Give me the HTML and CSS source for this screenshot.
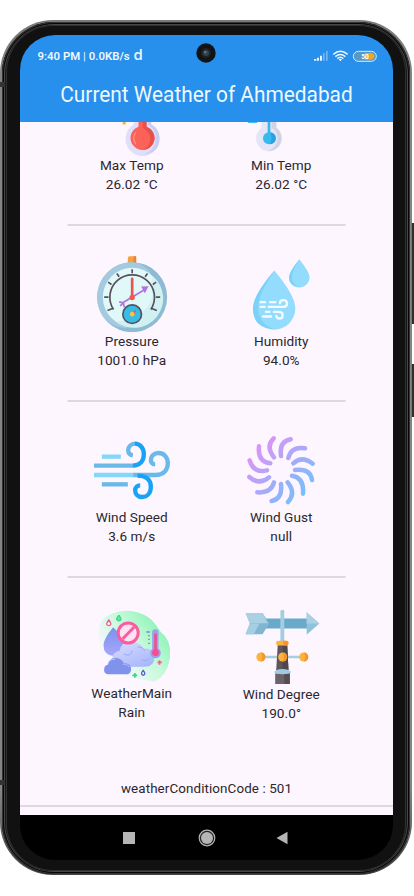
FILE: index.html
```
<!DOCTYPE html>
<html lang="en">
<head>
<meta charset="utf-8">
<title>Current Weather</title>
<link rel="stylesheet" href="styles.css">
</head>
<body>
<div class="phone">
  <i class="key volume"></i><i class="key power"></i>
  <i class="seam seam-tl"></i><i class="seam seam-bl"></i>
  <div class="rim"><div class="bezel"><div class="screen">
    <header class="top">
      <div class="status">
        <div class="clock">9:40 PM <span class="thin">|</span> 0.0KB/s <b class="app">d</b></div>
        <svg class="signals" viewBox="328 145 195 45" width="65" height="15">
          <g fill="#e6f3ff"><path d="M331 178h7v5h-7zM340 174h6v9h-6zM349 168h6v15h-6z"/><path opacity=".4" d="M358 161h5v22h-5zM367 154h5v29h-5z"/></g>
          <g fill="none" stroke="#eef7ff" stroke-width="4.5"><path d="M389 164q21-18 43 0M395 171q15-13 30 0M401 177q9-8 18 0"/></g><path fill="#fff" d="M405 179l5 6 5-6q-5-3-10 0z"/>
          <rect x="449" y="155" width="69" height="30" rx="15" fill="#5899c8" stroke="#d5eafa" stroke-width="3"/>
          <path d="M484 160h17q11 1 11 10t-11 10h-17z" fill="#eda530"/>
          <text x="484" y="178" class="charge">50</text>
        </svg>
      </div>
      <h1>Current Weather of Ahmedabad</h1>
      <svg class="camera" viewBox="0 0 20 20"><circle cx="10" cy="10" r="9.7" fill="#111416"/><circle cx="10" cy="10" r="5" fill="#1d2327"/><circle cx="10" cy="10" r="3" fill="#35434c"/><circle cx="9.3" cy="9.2" r="1.1" fill="#71818b"/></svg>
    </header>
    <main>
      <section class="row">
        <div class="cell">
          <svg class="icon" viewBox="40.5 -92 228 228">
            <path d="M160 0a26 26 0 0 1 52 0v41a51 51 0 1 1-52 0z" fill="#e0dffa"/><path d="M198-25q14 8 14 25v41q25 14 25 41 0 46-51 50 40-12 40-50 0-27-24-40z" fill="#c9cdf3"/>
            <path d="M174 0h24v48a36 36 0 1 1-24 0z" fill="#fc6257"/><path d="M187 0h11v48a36 36 0 0 1-12 70q23-9 23-35 0-18-22-31z" fill="#e9504b"/><path d="M166 66q-13 17 0 34" fill="none" stroke="#ff9185" stroke-width="4"/><circle cx="131" cy="37" r="5" fill="#f5b23c"/>
          </svg>
          <p>Max Temp</p><p>26.02 °C</p>
        </div>
        <div class="cell">
          <svg class="icon" viewBox="489 -90 228 228">
            <path d="M545 0a22 22 0 0 1 44 0v53a39 39 0 1 1-44 0z" fill="#e4e5f7"/><path d="M575-20q14 6 14 20v53a39 39 0 0 1-25 70q29-13 29-39 0-20-18-30z" fill="#d0d2e5"/>
            <path d="M563 0h8v70h-8z" fill="#38b7ec"/><circle cx="567" cy="85" r="18" fill="#38b9ef"/><path d="M570 67a18 18 0 0 1 0 36q9-19 0-36z" fill="#2aa2df"/><path d="M504 31h28v8h-28z" fill="#40c1f2"/>
          </svg>
          <p>Min Temp</p><p>26.02 °C</p>
        </div>
      </section>
      <hr>
      <section class="row">
        <div class="cell">
          <svg class="icon" viewBox="40.5 31.5 228 228">
            <rect x="142" y="32" width="25" height="24" rx="5" fill="#fba13b"/><path d="M159 32h8v24h-8z" fill="#e88537"/>
            <circle cx="155" cy="155" r="105" fill="#8ebbd4"/><path d="M155 50a105 105 0 0 0-87 164Q98 250 140 247L210 80Q190 53 155 50z" fill="#a4cadf"/>
            <circle cx="155" cy="155" r="88" fill="#e0f8f7"/><path d="M216 91a88 88 0 0 1-112 136Q190 225 216 155z" fill="#d1f0f2"/>
            <g fill="none" stroke="#574f5d" stroke-width="5"><path d="M99 192a67 67 0 1 1 112 0"/><path d="M155 71v12M109 84l7 10M201 84l-7 10M83 110l10 7M227 110l-10 7M71 155h13M239 155h-13M81 195l17-7M229 195l-17-7"/></g>
            <g fill="none" stroke="#b173dd" stroke-width="5"><path d="M128 171l65-39M116 169l13 3 2 13M119 181l11-10"/></g><path d="M182 123l22-1-11 21z" fill="#b173dd"/>
            <path d="M155 100v56" stroke="#e9544e" stroke-width="8" stroke-linecap="round"/><circle cx="155" cy="156" r="8" fill="#ee5a4b"/>
            <circle cx="155" cy="206" r="28" fill="#37bde5" stroke="#574f5d" stroke-width="5"/><path d="M152 204l16-13-9 19z" fill="#e74d50"/><circle cx="155" cy="206" r="7" fill="#ffc047"/>
          </svg>
          <p>Pressure</p><p>1001.0 hPa</p>
        </div>
        <div class="cell">
          <svg class="icon" viewBox="39 33.5 228 228">
            <path d="M133 77q63 75 63 114a63 63 0 0 1-127 0q0-39 64-114zM208 43q31 39 31 54a31 31 0 0 1-62 0q0-15 31-54z" fill="#94dcfe"/>
            <path d="M133 77q-50 75-49 112 2 48 48 64-63-3-63-62 0-39 64-114zM208 43q-23 38-22 55 1 20 20 29-29-3-29-30 0-15 31-54z" fill="#7bd1f8"/>
            <g fill="none" stroke="#f4fbff" stroke-width="7" stroke-linecap="round"><path d="M92 172h13M121 172h15M92 186h12M116 186h43q12 0 12-10t-11-10q-10 0-10 9M108 201h10M99 215h24M132 201h15q11 0 11 10t-10 10q-8 0-9-8"/></g>
          </svg>
          <p>Humidity</p><p>94.0%</p>
        </div>
      </section>
      <hr>
      <section class="row">
        <div class="cell">
          <svg class="icon" viewBox="40.5 20 228 228">
            <g fill="none" stroke-width="13">
              <path d="M64 94h57" stroke="#83d8fa"/><path d="M39 121h119" stroke="#6bb9e9"/><path d="M39 149h120" stroke="#83d8fa"/><path d="M64 177h78" stroke="#6bb9e9"/>
              <path d="M158 149h67c27 0 37-18 37-35 0-20-13-31-28-31-14 0-23 10-23 20 0 9 6 14 13 14" stroke="#6bb9e9"/>
              <path d="M164 55c-13 0-21 10-21 19 0 10 6 15 14 16" stroke="#6bb9e9"/><path d="M157 121c22 0 33-15 33-34 0-20-12-32-27-32" stroke="#18a3f6"/>
              <path d="M171 151c29 0 40 15 40 33 0 19-11 31-26 31-14 0-21-10-21-20 0-9 6-15 15-15" stroke="#18a3f6"/>
            </g>
          </svg>
          <p>Wind Speed</p><p>3.6 m/s</p>
        </div>
        <div class="cell">
          <svg class="icon" viewBox="39 22 228 228">
            <defs><linearGradient id="gust" gradientUnits="userSpaceOnUse" x1="85" y1="70" x2="220" y2="205"><stop stop-color="#da95f5"/><stop offset=".5" stop-color="#aaa9fa"/><stop offset="1" stop-color="#7abef9"/></linearGradient></defs>
            <g fill="none" stroke="url(#gust)" stroke-width="13.5" stroke-linecap="round"><path d="M131 41Q106 65 132 98M182 44Q147 50 153 94M225 71Q184 64 175 100M248 117Q216 92 190 116M246 166Q241 130 195 136M219 207Q223 159 186 153M174 232Q199 205 173 173M125 229Q158 223 153 178M82 203Q124 206 132 173M58 157Q88 183 117 158M59 107Q71 147 111 137M87 65Q82 111 121 116"/></g>
          </svg>
          <p>Wind Gust</p><p>null</p>
        </div>
      </section>
      <hr>
      <section class="row">
        <div class="cell">
          <svg class="icon" viewBox="40.5 22 228 228">
            <defs><linearGradient id="blob" x1="1" y1="0.1" x2=".15" y2=".75"><stop stop-color="#72f0a7"/><stop offset=".5" stop-color="#c4f9d9"/><stop offset="1" stop-color="#fbf7ff"/></linearGradient><linearGradient id="cloud" x2=".7" y2="1"><stop stop-color="#d9ddff"/><stop offset="1" stop-color="#a9b8fb"/></linearGradient><linearGradient id="drop" x2="0" y2="1"><stop stop-color="#7b92ed"/><stop offset="1" stop-color="#a8a7fb"/></linearGradient></defs>
            <path d="M62 62Q90 28 145 30q59 5 86 50 8 15 24 28 20 28 12 70-8 48-45 65-62-9-111-25-50-34-55-91-2-48 6-65z" fill="url(#blob)"/>
            <path d="M98 80q35 31 33 55-2 31-31 31-31-2-31-32 1-21 29-54z" fill="url(#drop)"/>
            <path d="M116 199q-25-9-20-30 4-16 21-18 4-28 34-28 28 0 39 21 28-3 32 24 0 31-30 30z" fill="url(#cloud)"/><path d="M130 160q20 10 25-10M184 177q13 8 23-6M171 139q15-1 22 12" fill="none" stroke="#9caaf0" stroke-width="3"/>
            <path d="M82 221q-13-3-11-17 1-10 11-12 4-21 25-20 16 1 23 15 22 1 22 20-2 15-18 14z" fill="#8192ed"/><path d="M82 191q4-15 22-15M127 191q13-3 18 8" fill="none" stroke="#b4c0ff" stroke-width="3"/>
            <circle cx="143" cy="97" r="30" fill="#ffe1f4" stroke="#fa5d9d" stroke-width="9"/><path d="M126 115l35-36" stroke="#fa5d9d" stroke-width="9"/>
            <rect x="215" y="86" width="19" height="72" rx="9" fill="#9a9fef"/><circle cx="225" cy="157" r="16" fill="#9a9fef"/><path d="M225 99v56" stroke="#ef4f96" stroke-width="8"/><circle cx="225" cy="156" r="10" fill="#fa4d8e"/><path d="M198 94h10M203 105h5M203 116h5M203 128h5" stroke="#7885dc" stroke-width="4"/>
            <path d="M85 58q-13 16 0 17 12-1 0-17z" fill="#fff0f6" stroke="#ef5c91" stroke-width="4"/><path d="M115 43q-14 16 0 18 14-2 0-18z" fill="#52ec99" stroke="#38c978" stroke-width="3"/><path d="M188 209q-10 12 0 15 10-3 0-15z" fill="#e5eaff" stroke="#5263cf" stroke-width="4"/>
            <path d="M231 185h13M237 179v13" stroke="#f3629d" stroke-width="5"/><path d="M156 224h14M163 217v14" stroke="#37d28b" stroke-width="5"/>
          </svg>
          <p>WeatherMain</p><p>Rain</p>
        </div>
        <div class="cell">
          <svg class="icon vane" viewBox="39 24 234 234">
            <path d="M102 53h132v31H102z" fill="#69a9c9"/><path d="M44 36h52l21 33-21 33H44l13-33z" fill="#81b6d0"/><path d="M44 36h52l17 32H57z" fill="#a9d1e3"/><path d="M44 102l13-33 30 0-18 33z" fill="#a4cee2"/><path d="M232 34l39 35-39 34z" fill="#8fc2db"/><path d="M232 34l39 35h-39z" fill="#a9d1e3"/>
            <path d="M151 31q0-5 6-5t6 5v93h-12z" fill="#a5cde0"/><path d="M92 168h130v8H92z" fill="#a8cddd"/>
            <path d="M143 134h29l4 78h-38z" fill="#5e565c"/><path d="M158 134h14l4 78h-18z" fill="#4f474e"/><rect x="138" y="122" width="38" height="14" rx="6" fill="#ffb13d"/><path d="M160 122h10q6 1 6 7t-6 7h-10z" fill="#f69431"/>
            <path d="M135 222h45v33h-45z" fill="#6c636a"/><path d="M163 222h17v33h-17z" fill="#554c54"/><path d="M132 219q3-9 25-10 23 1 27 10-5 6-26 6t-26-6z" fill="#9fcbe0"/>
            <g fill="#ffb239"><circle cx="91" cy="172" r="14"/><circle cx="158" cy="172" r="14"/><circle cx="223" cy="172" r="14"/></g><path d="M91 158a14 14 0 0 1 0 28q9-14 0-28zM158 158a14 14 0 0 1 0 28q9-14 0-28zM223 158a14 14 0 0 1 0 28q9-14 0-28z" fill="#f49530"/>
          </svg>
          <p>Wind Degree</p><p>190.0°</p>
        </div>
      </section>
      <footer>weatherConditionCode : 501</footer>
      <hr class="wide">
    </main>
    <nav>
      <svg viewBox="0 0 28 28"><path d="M8 8h12v12H8z" fill="#b5b5b5"/></svg>
      <svg viewBox="0 0 28 28"><circle cx="14" cy="14" r="7.8" fill="#222" stroke="#b5b5b5" stroke-width="1.2"/><circle cx="14" cy="14" r="6" fill="#b5b5b5"/></svg>
      <svg viewBox="0 0 28 28"><path d="M5.5 14l11-6.3v12.6z" fill="#b5b5b5"/></svg>
    </nav>
  </div></div></div>
</div>
</body>
</html>
```
FILE: styles.css
```
* { box-sizing: border-box; }
body { margin: 0; padding-top: 20px; height: 896px; background: #fff; overflow: hidden; font-family: Roboto, sans-serif; color: #2b272e; }
.phone { position: relative; width: 411.5px; height: 855px; padding: 1.5px; border-radius: 53px; background: linear-gradient(#777b76, #858585 8%, #858585 90%, #454545); }
.rim { height: 100%; padding: 3px 4.5px; border-radius: 52px; background: #171717; box-shadow: inset 0 0 0 1px #343434, inset 0 0 0 2px #060606, inset 0 0 0 3px #454545; }
.bezel { height: 100%; padding: 10.5px 12.5px 11px 14px; border-radius: 47px; background: #111; box-shadow: inset 0 0 0 1px #303030; }
.screen { display: flex; flex-direction: column; height: 100%; border-radius: 35px; overflow: hidden; background: #000; }
.key { position: absolute; left: 411px; width: 3px; background: #30312f; border-left: 1px solid #777; }
.volume { top: 203px; height: 101px; }
.power { top: 344px; height: 53px; }
.seam { position: absolute; left: 0; width: 5px; height: 5px; background: #333; z-index: 1; }
.seam-tl { top: 62px; }
.seam-bl { top: 760px; }
.top { position: relative; flex: 0 0 86.5px; background: #278fec; color: #edf8ff; }
.status { display: flex; justify-content: space-between; align-items: center; height: 41px; padding: 1px 15px 0 17.5px; }
.signals { display: block; margin-top: -1px; }
.clock { font-size: 11.4px; font-weight: 600; line-height: 20px; white-space: nowrap; }
.thin { font-weight: 400; }
.app { font: 600 15px/14px "Open Sans", sans-serif; margin-left: 1px; }
.charge { font: bold 20px Roboto, sans-serif; fill: #fff; text-anchor: middle; }
.camera { position: absolute; left: 176px; top: 8px; width: 20px; height: 20px; }
h1 { margin: 0; text-align: center; font-size: 22px; line-height: 37px; font-weight: 400; white-space: nowrap; transform: scaleX(.948); }
main { flex: 0 0 693.5px; overflow: hidden; background: #fdf6ff; }
.row { display: flex; width: 299px; height: 174.3px; margin: 0 auto; padding: 30px 0; }
.row:first-child { height: 102px; padding-top: 0; align-items: flex-end; }
.cell { flex: 1; text-align: center; }
.cell + .cell { position: relative; top: .6px; }
.icon { display: block; width: 76px; height: 76px; margin: 0 auto; }
.vane { width: 78px; margin-left: 36.5px; }
p { margin: 0; font-size: 13.6px; line-height: 19px; letter-spacing: .05px; white-space: nowrap; }
hr { width: 278px; height: 2px; margin: 0 auto; border: 0; background: #dfd8e1; transform: translateX(-.5px); }
footer { height: 52.5px; padding-top: 27px; text-align: center; font-size: 13.4px; line-height: 19px; letter-spacing: .1px; }
hr.wide { width: 100%; transform: none; }
nav { display: flex; justify-content: center; gap: 50px; padding-top: 9px; }
nav svg { width: 28px; height: 28px; }
```
